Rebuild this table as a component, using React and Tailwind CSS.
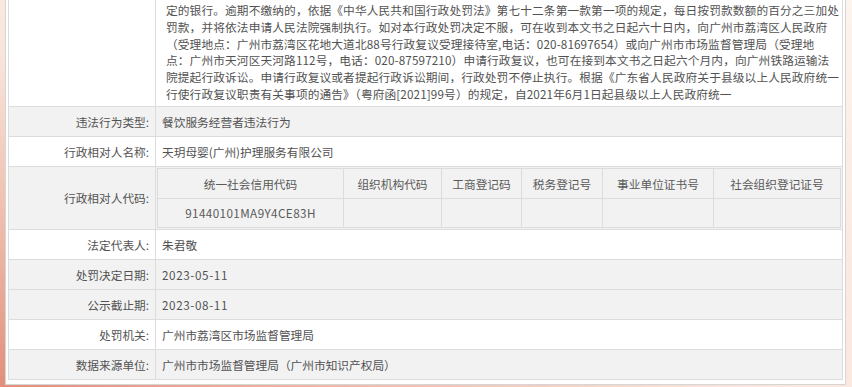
const notice = [
  "定的银行。逾期不缴纳的，依据《中华人民共和国行政处罚法》第七十二条第一款第一项的规定，每日按罚款数额的百分之三加处",
  "罚款，并将依法申请人民法院强制执行。如对本行政处罚决定不服，可在收到本文书之日起六十日内，向广州市荔湾区人民政府",
  "（受理地点：广州市荔湾区花地大道北88号行政复议受理接待室,电话：020-81697654）或向广州市市场监督管理局（受理地",
  "点：广州市天河区天河路112号，电话：020-87597210）申请行政复议，也可在接到本文书之日起六个月内，向广州铁路运输法",
  "院提起行政诉讼。申请行政复议或者提起行政诉讼期间，行政处罚不停止执行。根据《广东省人民政府关于县级以上人民政府统一",
  "行使行政复议职责有关事项的通告》（粤府函[2021]99号）的规定，自2021年6月1日起县级以上人民政府统一",
];

const codeCols = [
  { title: "统一社会信用代码", value: "91440101MA9Y4CE83H", w: "w-[186px]" },
  { title: "组织机构代码", value: "", w: "w-[98px]" },
  { title: "工商登记码", value: "", w: "w-[80px]" },
  { title: "税务登记号", value: "", w: "w-[81px]" },
  { title: "事业单位证书号", value: "", w: "w-[111px]" },
  { title: "社会组织登记证号", value: "", w: "" },
];

const cell = "border border-[#dcdcdc]";

function InfoRow({ label, value, gray, mono }) {
  return (
    <tr className={gray ? "bg-[#f2f2f2]" : "bg-white"}>
      <td className={`${cell} h-[30px] pr-[6px] text-right`}>{label}</td>
      <td className={`${cell} h-[30px] pl-[6px] ${mono ? "tracking-[0.6px]" : ""}`}>{value}</td>
    </tr>
  );
}

export default function App() {
  return (
    <div className="h-[387px] w-full overflow-hidden bg-[radial-gradient(ellipse_at_bottom_left,#e28f7b_0%,#efbcab_30%,#f9e4da_60%,#fdf4ee_100%)] font-['Noto_Sans_CJK_SC',sans-serif] text-[11.7px] text-[#525252]">
      <div className="-mt-[6px] ml-[5px] mr-[6px] border border-[#d6d6d6] bg-white px-[2px] pt-[2px] pb-[4px]">
        <table className="w-full table-fixed border-collapse border border-[#dcdcdc]">
          <colgroup>
            <col className="w-[147px]" />
            <col />
          </colgroup>
          <tbody>
            <tr className="bg-white">
              <td className={cell} />
              <td className={`${cell} pl-[10px] pr-[4px] pt-[4px] pb-[3px] leading-[16.8px] tracking-[0.12px]`}>
                {notice.map((line, i) => (
                  <div key={i} className="whitespace-nowrap">
                    {line}
                  </div>
                ))}
              </td>
            </tr>
            <InfoRow label="违法行为类型:" value="餐饮服务经营者违法行为" gray />
            <InfoRow label="行政相对人名称:" value="天玥母婴(广州)护理服务有限公司" />
            <tr className="bg-[#f2f2f2]">
              <td className={`${cell} pr-[6px] text-right`}>行政相对人代码:</td>
              <td className={`${cell} p-[1px]`}>
                <table className="w-full table-fixed border-collapse text-center text-[#5a5a5a]">
                  <colgroup>
                    {codeCols.map((c, i) => (
                      <col key={i} className={c.w} />
                    ))}
                  </colgroup>
                  <tbody>
                    <tr>
                      {codeCols.map((c, i) => (
                        <td key={i} className={`${cell} h-[30px]`}>
                          {c.title}
                        </td>
                      ))}
                    </tr>
                    <tr>
                      {codeCols.map((c, i) => (
                        <td key={i} className={`${cell} h-[29px] tracking-[0.4px]`}>
                          {c.value}
                        </td>
                      ))}
                    </tr>
                  </tbody>
                </table>
              </td>
            </tr>
            <InfoRow label="法定代表人:" value="朱君敬" />
            <InfoRow label="处罚决定日期:" value="2023-05-11" gray mono />
            <InfoRow label="公示截止期:" value="2023-08-11" gray mono />
            <InfoRow label="处罚机关:" value="广州市荔湾区市场监督管理局" />
            <InfoRow label="数据来源单位:" value="广州市市场监督管理局（广州市知识产权局）" gray />
          </tbody>
        </table>
      </div>
    </div>
  );
}
